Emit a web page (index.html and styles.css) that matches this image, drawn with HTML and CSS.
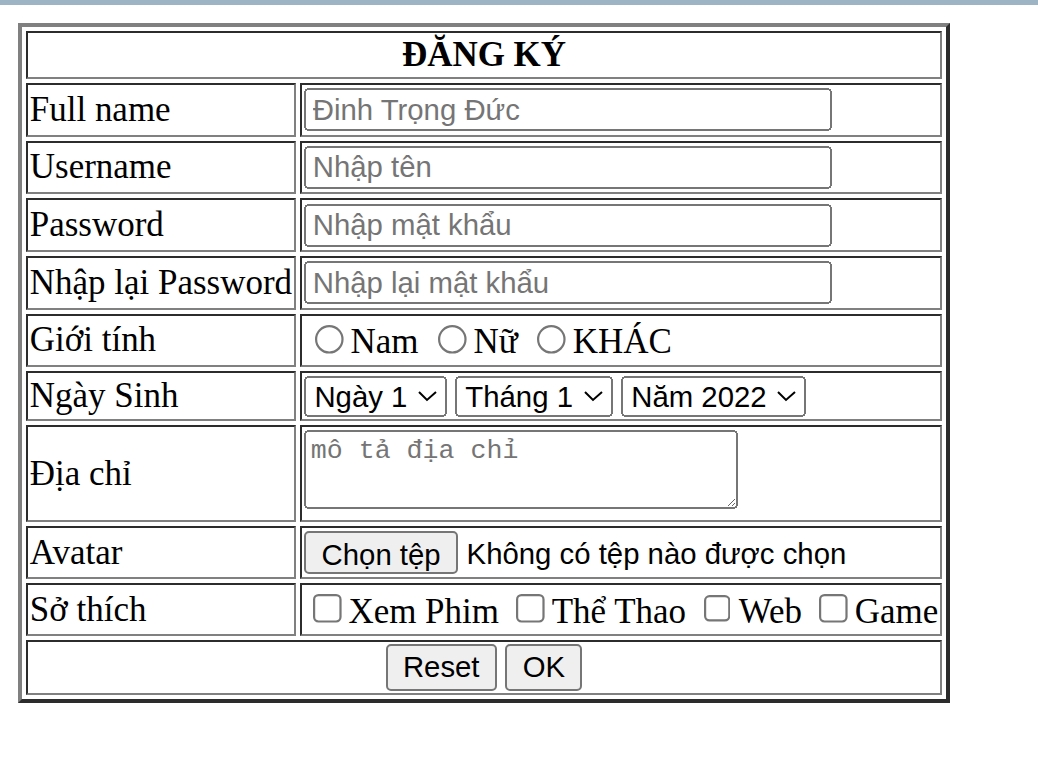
FILE: index.html
```html
<!DOCTYPE html>
<html lang="vi">
<head>
<meta charset="utf-8">
<title>Đăng ký</title>
<link rel="stylesheet" href="styles.css">
</head>
<body>
<div class="topbar"></div>
<div class="page">
<form class="reg-form">
<table class="reg">
<tr><th colspan="2" class="title">ĐĂNG KÝ</th></tr>
<tr class="row"><td>Full name</td><td><input type="text" class="field" placeholder="Đinh Trọng Đức"></td></tr>
<tr class="row"><td>Username</td><td><input type="text" class="field" placeholder="Nhập tên"></td></tr>
<tr class="row"><td>Password</td><td><input type="password" class="field" placeholder="Nhập mật khẩu"></td></tr>
<tr class="row"><td>Nhập lại Password</td><td><input type="password" class="field" placeholder="Nhập lại mật khẩu"></td></tr>
<tr class="row"><td>Giới tính</td><td><input type="radio" name="gt">Nam <input type="radio" name="gt">Nữ <input type="radio" name="gt">KHÁC</td></tr>
<tr class="row row-date"><td>Ngày Sinh</td><td><select class="pick"><option>Ngày 1</option><option>Ngày 2</option></select> <select class="pick"><option>Tháng 1</option><option>Tháng 2</option></select> <select class="pick"><option>Năm 2022</option><option>Năm 2021</option></select></td></tr>
<tr class="row row-addr"><td>Địa chỉ</td><td><textarea class="addr" placeholder="mô tả địa chỉ"></textarea></td></tr>
<tr class="row row-short"><td>Avatar</td><td><button type="button" class="file-btn">Chọn tệp</button><span class="file-name">Không có tệp nào được chọn</span></td></tr>
<tr class="row row-short"><td>Sở thích</td><td><input type="checkbox">Xem Phim <input type="checkbox">Thể Thao <input type="checkbox">Web <input type="checkbox">Game</td></tr>
<tr class="row row-actions"><td colspan="2" class="actions"><input type="reset" value="Reset"> <input type="submit" value="OK"></td></tr>
</table>
</form>
</div>
</body>
</html>
```
FILE: styles.css
```css
html, body {
  margin: 0;
  padding: 0;
  background: #ffffff;
}
body {
  font-family: "Liberation Serif", "Times New Roman", serif;
  color: #000000;
}
.topbar {
  height: 5px;
  background: #9cb4c4;
}
.page {
  zoom: 2.2;
  margin: 8px;
}
.reg-form {
  margin: 0;
}
.reg {
  border: 2px outset #808080;
  border-spacing: 2px;
  font-size: 15.9px;
}
.reg td, .reg th {
  box-sizing: border-box;
  border: 1px inset #808080;
  padding: 1px;
}
.row td {
  height: 24.4px;
}
.row-date td {
  height: 22.45px;
}
.row-addr td {
  height: 44.45px;
}
.row-short td {
  height: 24px;
}
.row-actions td {
  height: 23.7px;
}
.title {
  font-weight: bold;
  text-align: center;
}
.field {
  box-sizing: border-box;
  width: 240px;
  height: 19.5px;
  font-family: "Liberation Sans", Arial, sans-serif;
  font-size: 13.333px;
}
.field::placeholder {
  color: #757575;
}
.pick {
  font-family: "Liberation Sans", Arial, sans-serif;
  font-size: 13.333px;
  padding-right: 1px;
}
.addr {
  box-sizing: border-box;
  width: 197px;
  height: 36px;
  font-family: "Liberation Mono", "DejaVu Sans Mono", monospace;
  font-size: 12.1px;
}
.file-btn {
  box-sizing: border-box;
  height: 19.5px;
  font-family: "Liberation Sans", Arial, sans-serif;
  font-size: 13.333px;
  margin-right: 4px;
}
.file-name {
  font-family: "Liberation Sans", Arial, sans-serif;
  font-size: 13.333px;
}
.actions {
  text-align: center;
}
.actions input {
  font-family: "Liberation Sans", Arial, sans-serif;
  font-size: 13.333px;
}
```
